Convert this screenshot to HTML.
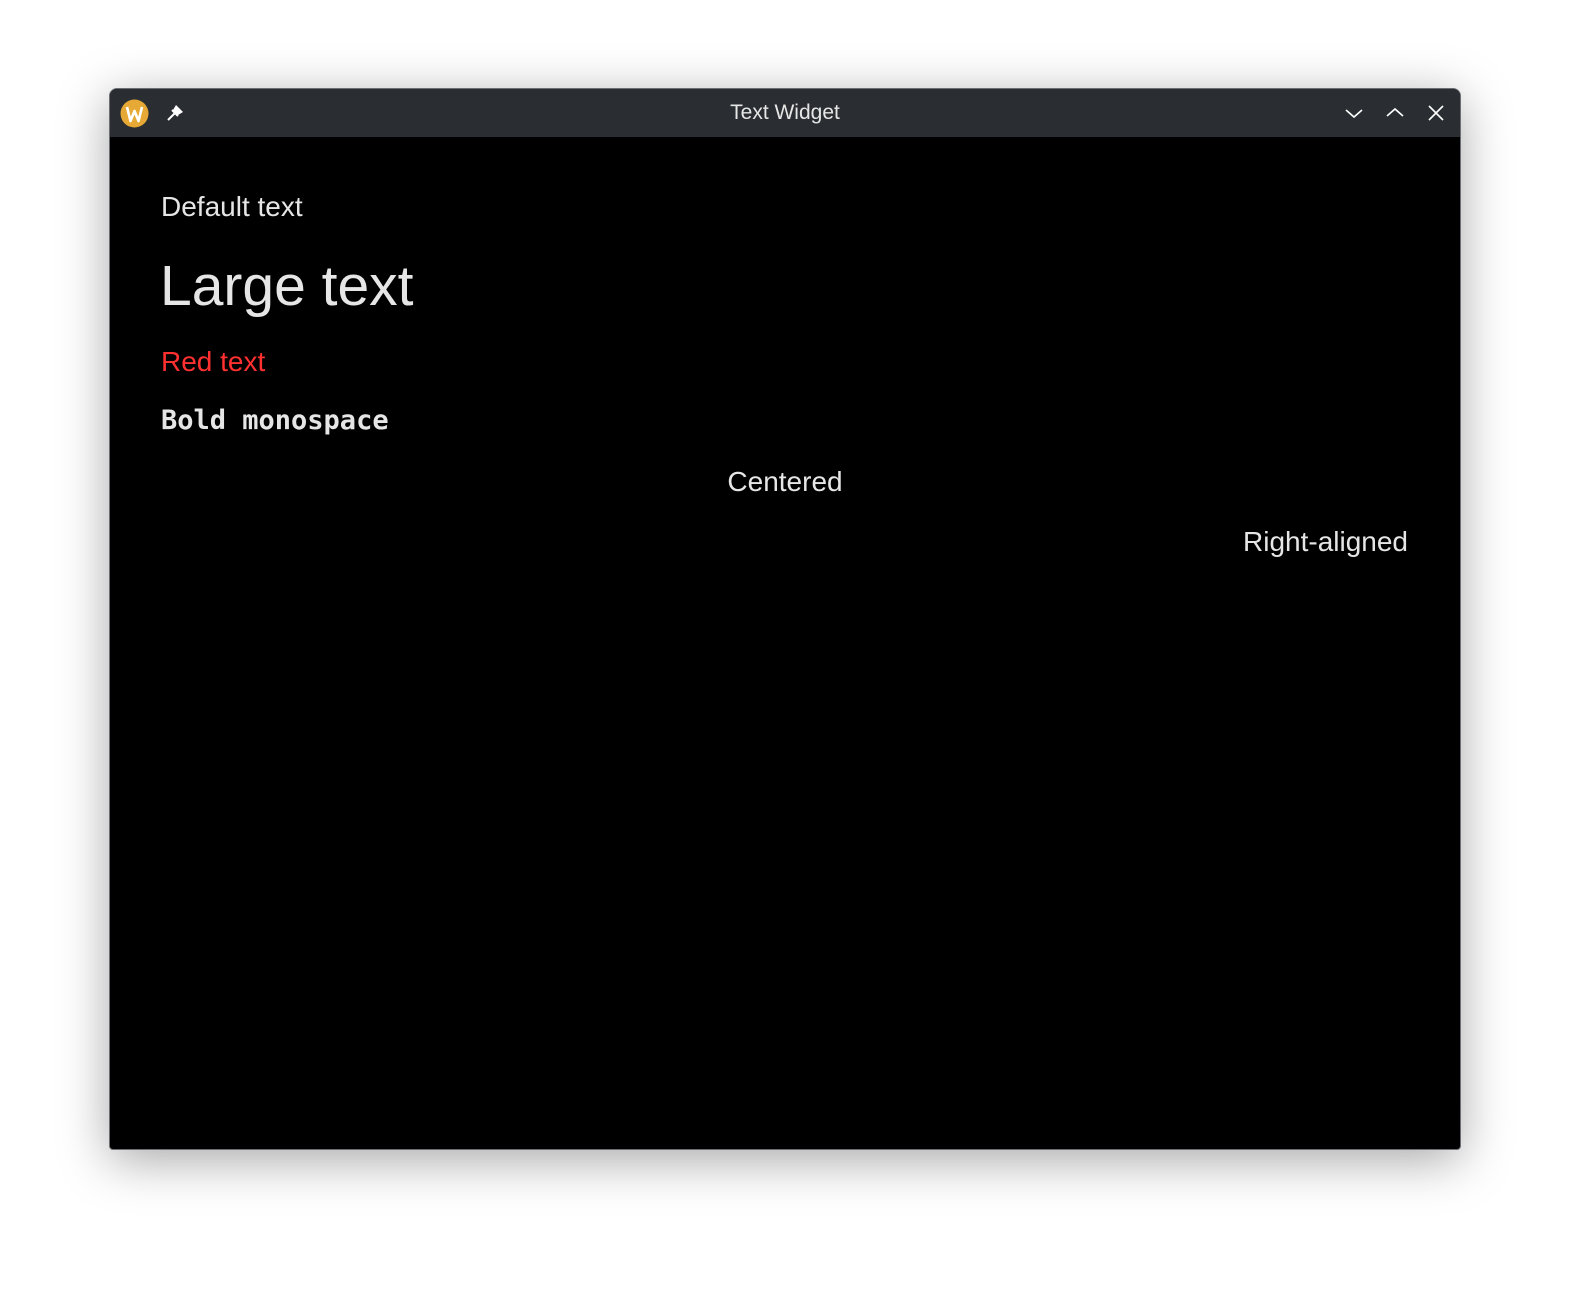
<!DOCTYPE html>
<html><head><meta charset="utf-8"><style>
html,body{margin:0;padding:0;width:1581px;height:1289px;background:#fff;overflow:hidden}
.win{position:absolute;left:109px;top:88px;width:1350px;height:1060px;border:1px solid #6b6e72;border-radius:8px 8px 4px 4px;background:#000;box-shadow:0 10px 50px rgba(0,0,0,0.35);overflow:hidden}
.tb{position:absolute;left:0;top:0;right:0;height:48px;background:#2a2e32}
.title{position:absolute;left:0;right:0;top:0;font-family:"Liberation Sans",sans-serif;font-size:21px;line-height:48px;text-align:center;color:#e6e6e6}
.t{position:absolute;color:#e6e6e6;font-family:"Liberation Sans",sans-serif;white-space:nowrap;line-height:1}
</style></head><body>
<div class="win">
 <div class="tb">
  <svg style="position:absolute;left:10px;top:10px" width="29" height="29" viewBox="0 0 29 29"><circle cx="14.5" cy="14.5" r="14" fill="#e7a935"/><path d="M7 8 L10.5 22 L14.5 12 L18.5 22 L22 8" stroke="#fff" stroke-width="2.6" fill="none" stroke-linejoin="round"/></svg>
  <svg style="position:absolute;left:54px;top:13px" width="22" height="22" viewBox="0 0 22 22"><path d="M12 3 L19 10 L14 13 L9 8 Z" fill="#fff"/><path d="M8 8 L14 14" stroke="#fff" stroke-width="2"/><path d="M10.5 11.5 L4 18" stroke="#fff" stroke-width="2"/></svg>
  <div class="title">Text Widget</div>
  <svg style="position:absolute;left:1234px;top:14px" width="20" height="20" viewBox="0 0 20 20"><path d="M2 7 L10 14 L18 7" stroke="#fff" stroke-width="1.6" fill="none"/></svg>
  <svg style="position:absolute;left:1275px;top:14px" width="20" height="20" viewBox="0 0 20 20"><path d="M2 13 L10 6 L18 13" stroke="#fff" stroke-width="1.6" fill="none"/></svg>
  <svg style="position:absolute;left:1316px;top:14px" width="20" height="20" viewBox="0 0 20 20"><path d="M3 3 L17 17 M17 3 L3 17" stroke="#fff" stroke-width="1.6" fill="none"/></svg>
 </div>
 <div class="t" style="left:51px;top:104px;font-size:28px">Default text</div>
 <div class="t" style="left:50px;top:169px;font-size:57px">Large text</div>
 <div class="t" style="left:51px;top:259px;font-size:28px;color:#ff3030">Red text</div>
 <div class="t" style="left:51px;top:318px;font-family:'DejaVu Sans Mono',monospace;font-weight:bold;font-size:27px;color:#e6e6e6">Bold monospace</div>
 <div class="t" style="left:0;right:0;text-align:center;top:379px;font-size:28px">Centered</div>
 <div class="t" style="right:52px;top:439px;font-size:28px">Right-aligned</div>
</div>
</body></html>
